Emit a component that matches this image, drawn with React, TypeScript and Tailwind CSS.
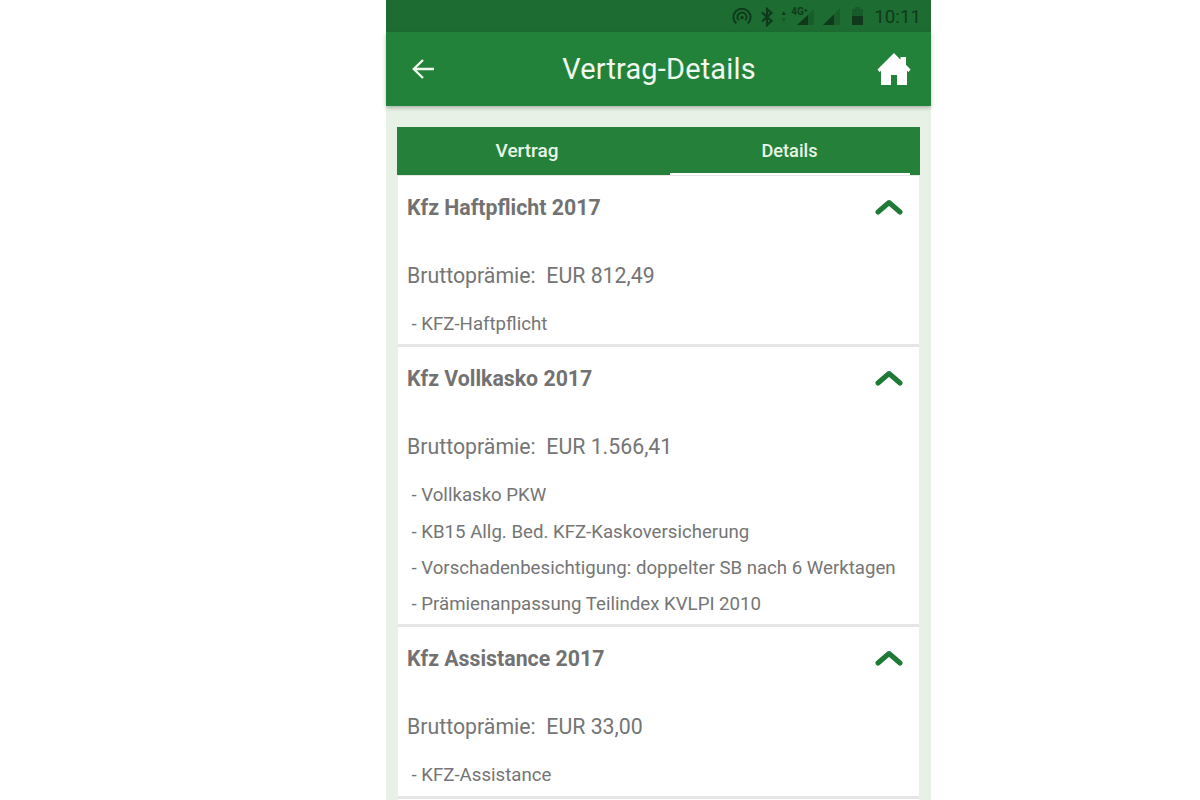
import React from "react";

const sections = [
  {
    title: "Kfz Haftpflicht 2017",
    premium: "EUR 812,49",
    items: ["KFZ-Haftpflicht"],
  },
  {
    title: "Kfz Vollkasko 2017",
    premium: "EUR 1.566,41",
    items: [
      "Vollkasko PKW",
      "KB15 Allg. Bed. KFZ-Kaskoversicherung",
      "Vorschadenbesichtigung: doppelter SB nach 6 Werktagen",
      "Prämienanpassung Teilindex KVLPI 2010",
    ],
  },
  {
    title: "Kfz Assistance 2017",
    premium: "EUR 33,00",
    items: ["KFZ-Assistance"],
  },
];

const StatusIcons = () => (
  <div className="flex items-center text-[#10391c]">
    {/* hotspot */}
    <svg width="20" height="20" viewBox="0 0 20 20" fill="none" stroke="currentColor" strokeWidth="2" className="mr-[8px]">
      <path d="M4.2 16.6A8.6 8.6 0 1 1 15.8 16.6" />
      <path d="M6.8 13.4A4.6 4.6 0 1 1 13.2 13.4" />
      <circle cx="10" cy="10.5" r="1.7" fill="currentColor" stroke="none" />
    </svg>
    {/* bluetooth */}
    <svg width="14" height="20" viewBox="0 0 14 20" fill="none" stroke="currentColor" strokeWidth="2.2" className="mr-[8px]">
      <path d="M2 5.5L11.5 14L7 18V2L11.5 6L2 14.5" />
    </svg>
    {/* 4G signal */}
    <div className="relative w-[34px] h-[22px] mr-[5px]">
      <span className="absolute left-0 top-[4px] text-[7px] leading-[7px] font-bold">▴</span>
      <span className="absolute left-0 top-[11px] text-[7px] leading-[7px] font-bold opacity-40">▾</span>
      <svg width="34" height="22" viewBox="0 0 34 22" className="absolute left-0 top-0">
        <path d="M32 3V19H15Z" fill="currentColor" opacity="0.3" />
        <path d="M26 9V19H15Z" fill="currentColor" />
      </svg>
      <span className="absolute left-[9px] top-0 text-[10px] leading-[12px] font-bold">4G⁺</span>
    </div>
    {/* signal */}
    <svg width="20" height="20" viewBox="0 0 20 20" className="mr-[10px]">
      <path d="M19 1V18H2Z" fill="currentColor" opacity="0.3" />
      <path d="M13 7.5V18H2Z" fill="currentColor" />
    </svg>
    {/* battery */}
    <svg width="13" height="22" viewBox="0 0 13 22" className="mr-[10px]">
      <path d="M4 1H9V3H12V19H1V3H4Z" fill="currentColor" opacity="0.35" />
      <path d="M1 10H12V19H1Z" fill="currentColor" />
    </svg>
    <span className="text-[18.8px] leading-[20px] text-[#10391c]">10:11</span>
  </div>
);

const App: React.FC = () => {
  return (
    <div className="h-screen overflow-hidden bg-white font-['Roboto',sans-serif]">
      <div className="ml-[386px] w-[545px] h-full bg-[#e8f1e6] flex flex-col">
        {/* Status bar */}
        <div className="h-[32px] bg-[#1d6d32] flex items-center justify-end pr-[10px] pt-[2px] shrink-0">
          <StatusIcons />
        </div>

        {/* App bar */}
        <header className="h-[74px] shrink-0 bg-[#23823a] flex items-center justify-between pl-[25px] pr-[20px] shadow-[0_2px_4px_rgba(0,0,0,0.25)] relative">
          <svg width="26" height="24" viewBox="0 0 26 24" fill="none" stroke="#f1f8ef" strokeWidth="2.4">
            <path d="M23 12H3M12 3L2.8 12L12 21" />
          </svg>
          <h1 className="pl-[4px] text-[28.9px] leading-[36px] text-[#f1f8ef] tracking-[0.2px]">Vertrag-Details</h1>
          <svg width="34" height="34" viewBox="0 0 34 34" fill="#ffffff">
            <path d="M17 1L0.5 17.5L2.5 20L4 18.7V33H14V23H20V33H30V18.7L31.5 20L33.5 17.5L29 12.8V5H23.5V7.8Z" />
          </svg>
        </header>

        {/* Tabs + cards */}
        <main className="flex-1 pt-[21px] pl-[11px] pr-[11px] min-h-0">
          <div className="h-[48px] bg-[#25803a] flex">
            <div className="w-[260px] flex items-center justify-center pt-[1px] text-[19px] font-medium text-[#e9f5e6]">
              Vertrag
            </div>
            <div className="flex-1 flex flex-col">
              <div className="flex-1 flex items-center justify-center pt-[2px] pl-[2px] text-[18.2px] font-medium text-[#e9f5e6]">
                Details
              </div>
              <div className="h-[2px] w-[240px] ml-[13px] bg-white"></div>
            </div>
          </div>

          <div className="mx-[1px] bg-[#e6e6e6] flex flex-col gap-[3px] pt-[1px]">
            {sections.map((s) => (
              <section key={s.title} className="bg-white pl-[9px] pr-[16px] pt-[16px] pb-[2px] last:pb-[4px]">
                <div className="flex items-center justify-between h-[32px]">
                  <h2 className="text-[21.3px] font-bold text-[#727272] leading-[32px]">{s.title}</h2>
                  <svg width="30" height="18" viewBox="0 0 30 18" fill="none" stroke="#1f7a38" strokeWidth="5" strokeLinecap="round" strokeLinejoin="round">
                    <path d="M5 13L16 3.5L27 13" />
                  </svg>
                </div>
                <p className="mt-[36px] text-[21.3px] leading-[32px] text-[#757575]">
                  Bruttoprämie:&nbsp; {s.premium}
                </p>
                <ul className="mt-[14px] pl-[4.5px] text-[18.65px] leading-[36.3px] text-[#757575]">
                  {s.items.map((it) => (
                    <li key={it}>- {it}</li>
                  ))}
                </ul>
              </section>
            ))}
            <div className="h-[10px] bg-white"></div>
          </div>
        </main>
      </div>
    </div>
  );
};

export default App;
